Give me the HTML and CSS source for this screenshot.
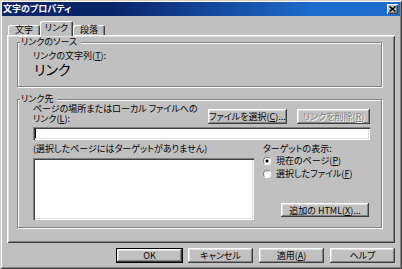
FILE: index.html
```html
<!DOCTYPE html>
<html>
  <head>
    <title>文字のプロパティ</title>
    <meta charset="utf-8">
    <link rel="stylesheet" href="styles.css">
  </head>
  <body>
    <div class="window">
      <div class="titlebar">
        <span class="title">文字のプロパティ</span>
        <span class="close">
          <svg width="7" height="6" viewBox="0 0 7 6"><path d="M0.5 0.5l6 5M6.5 0.5l-6 5" stroke="#000" stroke-width="1.5" fill="none"/></svg>
        </span>
      </div>

      <div class="body">
        <div class="tabs">
          <div class="tab">文字</div>
          <div class="tab active">リンク</div>
          <div class="tab">段落</div>
        </div>

        <div class="panel">
          <fieldset class="group">
            <legend>リンクのソース</legend>
            <div class="group-body source">
              <div class="line">リンクの文字列(<u>T</u>):</div>
              <div class="link-text">リンク</div>
            </div>
          </fieldset>

          <fieldset class="group target">
            <legend>リンク先</legend>
            <div class="group-body">
              <div class="path-row">
                <div class="path-label">
                  <div class="line">ページの場所またはローカル ファイルへの</div>
                  <div class="line">リンク(<u>L</u>):</div>
                </div>
                <button class="btn browse">ファイルを選択(<u>C</u>)...</button>
                <button class="btn remove" disabled>リンクを削除(<u>R</u>)</button>
              </div>
              <div class="input"><span class="caret"></span></div>
              <div class="target-row">
                <div class="list-col">
                  <div class="line">(選択したページにはターゲットがありません)</div>
                  <div class="listbox"></div>
                </div>
                <div class="show-col">
                  <div class="line">ターゲットの表示:</div>
                  <div class="radio"><span class="dot checked"></span>現在のページ(<u>P</u>)</div>
                  <div class="radio"><span class="dot"></span>選択したファイル(<u>F</u>)</div>
                  <button class="btn extra">追加の HTML(<u>X</u>)...</button>
                </div>
              </div>
            </div>
          </fieldset>
        </div>

        <div class="actions">
          <button class="btn default">OK</button>
          <button class="btn">キャンセル</button>
          <button class="btn">適用(<u>A</u>)</button>
          <button class="btn">ヘルプ</button>
        </div>
      </div>
    </div>
  </body>
</html>
```

FILE: styles.css
```css
* {
  box-sizing: border-box;
  margin: 0;
  padding: 0;
}

body {
  width: 402px;
  height: 269px;
  overflow: hidden;
  font-family: "Noto Sans CJK JP", sans-serif;
  font-size: 9px;
  font-feature-settings: "palt";
  color: #000;
  background-color: #c0c0c0;
}

u {
  text-decoration: underline;
  text-underline-offset: 1px;
}

/* window frame */
.window {
  width: 402px;
  height: 269px;
  padding: 2px;
  display: flex;
  flex-direction: column;
  background-color: #c0c0c0;
  box-shadow: inset 1px 1px #d4d0c8, inset -1px -1px #404040, inset 2px 2px #fff, inset -2px -2px #808080;
}

.titlebar {
  height: 14px;
  display: flex;
  align-items: center;
  justify-content: space-between;
  padding: 0 2px 0 1px;
  color: #fff;
  font-weight: bold;
  line-height: 12px;
  background: linear-gradient(to right, #0a246a 28%, #1c6ccb 78%);
}

.close {
  width: 11px;
  height: 10px;
  display: flex;
  align-items: center;
  justify-content: center;
  background-color: #c0c0c0;
  box-shadow: inset 1px 1px #fff, inset -1px -1px #404040, inset -2px -2px #808080;
}
.close svg {
  display: block;
}

.body {
  flex: 1;
  display: flex;
  flex-direction: column;
  padding: 5px 5px 4px;
}

/* tabs */
.tabs {
  height: 14px;
  display: flex;
  align-items: flex-end;
  padding-left: 1px;
}
.tab {
  width: 32px;
  height: 10px;
  line-height: 10px;
  text-align: center;
  border-radius: 2px 2px 0 0;
  background-color: #c0c0c0;
  box-shadow: inset 1px 1px #fff, inset -1px 0 #404040, inset -2px 0 #808080;
}
.tab.active {
  width: 33px;
  height: 15px;
  margin-bottom: -1px;
  padding-top: 2px;
  position: relative;
  z-index: 1;
}

.panel {
  height: 208px;
  padding: 2px 13px 0 10px;
  box-shadow: inset 1px 1px #fff, inset -1px -1px #404040, inset 2px 2px #dfdfdf, inset -2px -2px #808080;
}

/* group boxes */
.group {
  min-width: 0;
  border: 1px solid #808080;
  box-shadow: inset 1px 1px #fff, 1px 1px #fff;
}
.group legend {
  margin-left: 2px;
  padding: 0 4px 0 1px;
  line-height: 10px;
  background-color: #c0c0c0;
}
.group.target {
  margin-top: 7px;
}
.group-body {
  padding: 0 11px 7px 15px;
}
.group-body.source {
  padding-top: 4px;
  padding-bottom: 9px;
}

.line {
  line-height: 10px;
  white-space: nowrap;
}
.link-text {
  font-size: 14px;
  line-height: 16px;
  padding-left: 1px;
}

.path-row {
  height: 20px;
  display: flex;
  align-items: flex-end;
  gap: 10px;
}
.path-label {
  flex: 1;
}

.input {
  height: 13px;
  margin-top: 3px;
  padding: 2px 2px 0;
  background-color: #fff;
  box-shadow: inset 1px 1px #808080, inset 2px 2px #404040, inset -1px -1px #fff, inset -2px -2px #dfdfdf;
}
.caret {
  display: block;
  width: 1px;
  height: 9px;
  background-color: #000;
}

.target-row {
  display: flex;
  gap: 9px;
  margin-top: 4px;
}
.list-col {
  width: 221px;
}
.listbox {
  height: 62px;
  margin-top: 4px;
  background-color: #fff;
  box-shadow: inset 1px 1px #808080, inset 2px 2px #404040, inset -1px -1px #fff, inset -2px -2px #dfdfdf;
}
.show-col {
  flex: 1;
  display: flex;
  flex-direction: column;
}

.radio {
  height: 13px;
  display: flex;
  align-items: center;
  white-space: nowrap;
}
.radio:first-of-type {
  margin-top: 3px;
}
.dot {
  width: 8px;
  height: 8px;
  margin-right: 5px;
  border-radius: 50%;
  border: 1px solid;
  border-color: #808080 #fff #fff #808080;
  background-color: #fff;
}
.dot.checked {
  background: radial-gradient(circle, #000 1.3px, #fff 1.8px);
}

/* buttons */
.btn {
  font: inherit;
  font-feature-settings: "palt";
  color: #000;
  height: 15px;
  line-height: 13px;
  border: 0;
  background-color: #c0c0c0;
  white-space: nowrap;
  box-shadow: inset -1px -1px #404040, inset 1px 1px #fff, inset -2px -2px #808080, inset 2px 2px #dfdfdf;
}
.btn:disabled {
  color: #808080;
  text-shadow: 1px 1px #fff;
}
.browse {
  width: 81px;
}
.remove {
  width: 74px;
}
.extra {
  width: 88px;
  height: 14px;
  margin: auto 1px 3px auto;
}

.actions {
  display: flex;
  justify-content: flex-end;
  gap: 6px;
  margin-top: 5px;
}
.actions .btn {
  width: 65px;
}
.actions .default {
  width: 67px;
  margin-right: -1px;
  border: 1px solid #000;
}
```
